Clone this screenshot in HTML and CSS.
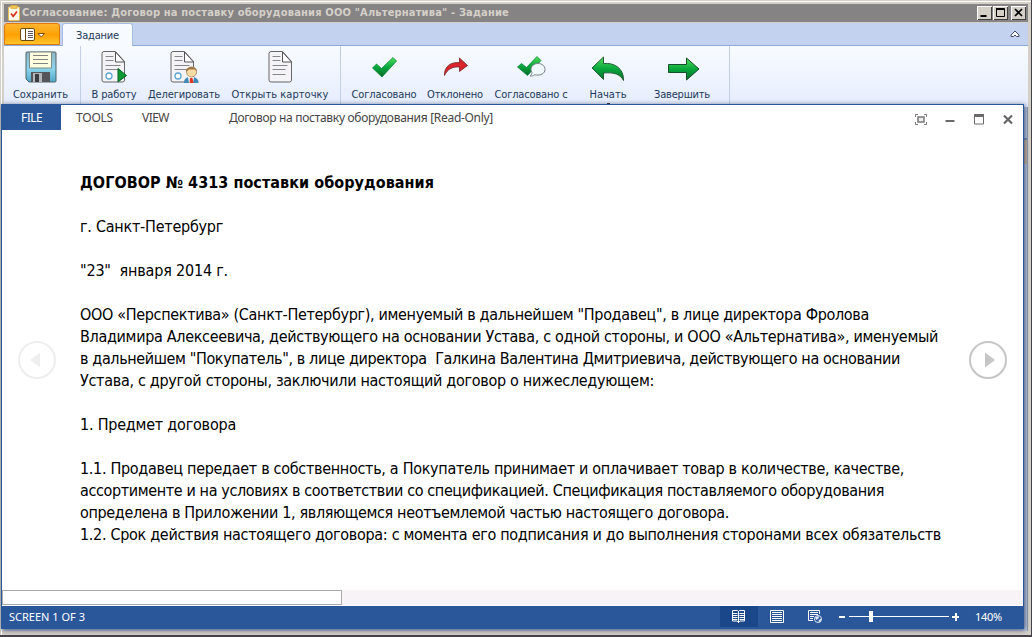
FILE: index.html
```html
<!DOCTYPE html>
<html lang="ru">
<head>
<meta charset="utf-8">
<title>Задание</title>
<link rel="stylesheet" href="styles.css">
</head>
<body>
<div class="window">
  <header class="titlebar">
    <svg class="app-icon" width="12" height="16" viewBox="0 0 12 16"><rect x=".5" y="2" width="11" height="13.500" rx="1" fill="#fffbea" stroke="#e9bf55"/><rect x="3" y=".5" width="6" height="3" fill="#f4c54c" stroke="#e0a630" stroke-width=".6"/><path d="M3 8.500l2.200 2.800L9 6.500" fill="none" stroke="#d8321c" stroke-width="1.700"/></svg>
    <span class="fit" data-w="487">Согласование: Договор на поставку оборудования ООО "Альтернатива" - Задание</span>
    <div class="win-buttons">
      <svg width="15" height="14" viewBox="0 0 15 14"><path d="M3.500 10H9.500" stroke="#000" stroke-width="2"/></svg>
      <svg width="15" height="14" viewBox="0 0 15 14"><path d="M3 2.500H11.500V10.500H3.500V2M3 3.500H12" fill="none" stroke="#000"/></svg>
      <svg class="gap" width="15" height="14" viewBox="0 0 15 14"><path d="M4 3l7 7M11 3l-7 7" stroke="#000" stroke-width="1.7"/></svg>
    </div>
  </header>
  <nav class="tabs">
    <div class="app-menu">
      <svg width="26" height="13" viewBox="0 0 26 13"><rect x=".5" y=".5" width="14" height="12" rx="1.500" fill="#fff" stroke="#6b4a10"/><path d="M5.500 1V12" stroke="#6b4a10"/><path d="M8 3.500h5M8 5.500h5M8 7.500h5M8 9.500h5" stroke="#555"/><path d="M18 5.500h6.500l-3.250 3.500z" fill="#fff" stroke="#7a4a10"/></svg>
    </div>
    <div class="tab"><span class="fit" data-w="43">Задание</span></div>
    <svg class="collapse" width="10" height="8" viewBox="0 0 10 8"><path d="M1 5l4-4 4 4v1.500H6.500L5 5 3.500 6.500H1z" fill="#fff" stroke="#444b66"/></svg>
  </nav>
  <section class="ribbon">
    <div class="group g-save">
      <div class="cmd">
        <svg width="32" height="32" viewBox="0 0 32 32"><defs><linearGradient id="disk" x2="0" y2="1"><stop stop-color="#8fb4c2"/><stop offset=".55" stop-color="#8ed6ef"/><stop offset="1" stop-color="#4fa6c8"/></linearGradient></defs><path d="M1 2q0-1 1-1h28q1 0 1 1v28q0 1-1 1H4l-3-3z" fill="url(#disk)" stroke="#51636c"/><path d="M4.500 1h22v16h-22z" fill="#fffde0" stroke="#7c8c88"/><path d="M8 4.500h15M8 8.500h15M8 12.500h15" stroke="#7f8481"/><path d="M6 21h19v10H6z" fill="#55555a"/><path d="M8 22h9v9H8z" fill="#b4b7ba"/><path d="M10 23h4v8h-4z" fill="#3b3b3f"/></svg>
        <span class="fit" data-w="55">Сохранить</span>
      </div>
    </div>
    <div class="group g-work">
      <div class="cmd w60">
        <svg width="26" height="32" viewBox="0 0 26 32"><use href="#doc"/><circle cx="8" cy="25" r="3" fill="#fff" stroke="#5ba6d2" stroke-width="1.300"/><path d="M17 17.500l8.500 7L17 31z" fill="#0c9a34" stroke="#0a5e20"/></svg>
        <span class="fit" data-w="45">В работу</span>
      </div>
      <div class="cmd w80">
        <svg class="delegate" width="30" height="32" viewBox="0 0 30 32"><use href="#doc"/><circle cx="8" cy="25" r="3" fill="#fff" stroke="#5ba6d2" stroke-width="1.300"/><path d="M14 32c0-5 3-6 7-6s7.500 1 7.500 6z" fill="#3f88b8"/><path d="M18 26h6l-1 6h-4z" fill="#fff"/><path d="M20 27h2.500l1 5h-4z" fill="#e23a20"/><circle cx="21.500" cy="21" r="5" fill="#fbdca4" stroke="#8b6538" stroke-width=".6"/><path d="M16 21c-1-6 11-7 11-.5l-2-2h-6z" fill="#a07844"/></svg>
        <span class="fit" data-w="72">Делегировать</span>
      </div>
      <div class="cmd w110">
        <svg width="24" height="32" viewBox="0 0 24 32"><defs><g id="doc"><path d="M3 .5h11.500l9 10V29a2 2 0 0 1-2 2H3a2 2 0 0 1-2-2V2.500a2 2 0 0 1 2-2z" fill="#f4f4f7" stroke="#66666b"/><path d="M14.500 1v10h9z" fill="#fff" stroke="#55555a"/><path d="M4.500 5.500h8M4.500 9.500h8M4.500 14.500h15M4.500 18.500h13" stroke="#87878c"/></g></defs><use href="#doc"/><path d="M4.500 23.500h13" stroke="#87878c"/></svg>
        <span class="fit" data-w="97">Открыть карточку</span>
      </div>
    </div>
    <div class="group g-result">
      <div class="cmd w72">
        <svg width="32" height="32" viewBox="0 0 32 32"><defs><linearGradient id="gr" x2="0" y2="1"><stop stop-color="#54dc5c"/><stop offset=".5" stop-color="#08a83c"/><stop offset="1" stop-color="#066a2a"/></linearGradient></defs><path d="M4.500 17l4-4 5 4.500L25 6.500l3.500 3.500L14 26z" fill="url(#gr)" stroke="#07883a" stroke-width=".8"/></svg>
        <span class="fit" data-w="65">Согласовано</span>
      </div>
      <div class="cmd w70">
        <svg width="32" height="32" viewBox="0 0 32 32"><path d="M5.500 24.500C5 15 12 11 20.500 11.500V7l8 7.500-8 6v-4.500c-7-.5-12 2-15 8.500z" fill="#d9252b" stroke="#74282a" stroke-width=".8"/></svg>
        <span class="fit" data-w="56">Отклонено</span>
      </div>
      <div class="cmd w82">
        <svg width="32" height="32" viewBox="0 0 32 32"><path d="M2.500 16l4-3.500 5 4L22 5.500l4 4L12.500 24.500z" fill="url(#gr)" stroke="#07883a" stroke-width=".8"/><path d="M17 21.500c-.2 1.800-.8 2.700-1.800 3.500 1.800.2 3.200-.3 4.300-1.200C25.500 25 30 22.500 30 18.500c0-3.500-3-6-7-6s-7 2.500-7 6c0 1.200.4 2.200 1 3z" fill="#f1fbff" stroke="#777f85"/></svg>
        <span class="fit" data-w="73">Согласовано с</span>
      </div>
      <div class="cmd w72">
        <svg width="34" height="32" viewBox="0 0 34 32"><path d="M1 17L12.500 6v6.500C23 11.500 33 17 32.500 29.500c-3-6-9-8.500-20-7.500v6.500z" fill="url(#gr)" stroke="#225e35"/></svg>
        <span class="fit" data-w="37">Начать</span>
        <i class="more"></i>
      </div>
      <div class="cmd w76">
        <svg class="finish" width="34" height="32" viewBox="0 0 34 32"><path d="M1.500 13.500h18v-6.500L32 18 19.500 29v-7.500h-18z" fill="url(#gr)" stroke="#174d2c"/></svg>
        <span class="fit" data-w="56">Завершить</span>
      </div>
    </div>
  </section>
  <div class="backdrop"><i></i></div>
</div>

<main class="word">
  <header class="word-bar">
    <div class="file"><span class="fit" data-w="21">FILE</span></div>
    <div class="tools"><span class="fit" data-w="37">TOOLS</span></div>
    <div class="view"><span class="fit" data-w="27">VIEW</span></div>
    <div class="doc-name"><span class="fit" data-w="264">Договор на поставку оборудования [Read-Only]</span></div>
    <div class="word-buttons">
      <svg width="12" height="11" viewBox="0 0 12 11"><path d="M.5 3V.500H3M9 .500h2.500V3M11.500 8v2.500H9M3 10.500H.500V8" fill="none" stroke="#777"/><rect x="3" y="3" width="6" height="5" fill="#eee" stroke="#777" stroke-width="1.500"/></svg>
      <svg width="10" height="11" viewBox="0 0 10 11"><path d="M.500 7H9.500" stroke="#6b6b6b" stroke-width="2"/></svg>
      <svg width="10" height="11" viewBox="0 0 10 11"><path d="M.500 1v9h9V1" fill="none" stroke="#6b6b6b"/><path d="M0 1.500h10" stroke="#6b6b6b" stroke-width="3"/></svg>
      <svg width="10" height="11" viewBox="0 0 10 11"><path d="M1 1.500l8 8M9 1.500l-8 8" stroke="#666" stroke-width="2.200"/></svg>
    </div>
  </header>
  <section class="reader">
    <svg class="pager prev" width="40" height="40" viewBox="0 0 40 40"><circle cx="20" cy="20" r="18" fill="#fff" stroke="currentColor" stroke-width="2"/><path d="M13 20l10-7.500v15z" fill="currentColor"/></svg>
    <article class="doc">
      <h1><span class="fit" data-w="354">ДОГОВОР № 4313 поставки оборудования</span></h1>
      <p><span class="fit" data-w="143">г. Санкт-Петербург</span></p>
      <p><span class="fit" data-w="148">"23"  января 2014 г.</span></p>
      <p><span class="fit" data-w="789">ООО «Перспектива» (Санкт-Петербург), именуемый в дальнейшем "Продавец", в лице директора Фролова</span>
<span class="fit" data-w="858">Владимира Алексеевича, действующего на основании Устава, с одной стороны, и ООО «Альтернатива», именуемый</span>
<span class="fit" data-w="820">в дальнейшем "Покупатель", в лице директора  Галкина Валентина Дмитриевича, действующего на основании</span>
<span class="fit" data-w="574">Устава, с другой стороны, заключили настоящий договор о нижеследующем:</span></p>
      <p><span class="fit" data-w="156">1. Предмет договора</span></p>
      <p><span class="fit" data-w="824">1.1. Продавец передает в собственность, а Покупатель принимает и оплачивает товар в количестве, качестве,</span>
<span class="fit" data-w="804">ассортименте и на условиях в соответствии со спецификацией. Спецификация поставляемого оборудования</span>
<span class="fit" data-w="649">определена в Приложении 1, являющемся неотъемлемой частью настоящего договора.</span>
<span class="fit" data-w="861">1.2. Срок действия настоящего договора: с момента его подписания и до выполнения сторонами всех обязательств</span></p>
    </article>
    <svg class="pager next" width="40" height="40" viewBox="0 0 40 40"><circle cx="20" cy="20" r="18" fill="#fff" stroke="currentColor" stroke-width="2"/><path d="M17 12.500L27 20l-10 7.500z" fill="currentColor"/></svg>
  </section>
  <div class="scroll"><div class="thumb"></div></div>
  <footer class="status">
    <span class="fit" data-w="76">SCREEN 1 OF 3</span>
    <div class="modes">
      <div class="mode active"><svg width="14" height="14" viewBox="0 0 14 14"><path d="M.500.500h5l1 1 1-1h5v10.500H8l-1.500 1.500L5 11H.500zM6.500 1v12M1 3.500h4.500M1 5.500h4.500M1 7.500h4.500M1 9.500h4.500M7.500 3.500H13M7.500 5.500H13M7.500 7.500H13M7.500 9.500H13" fill="none" stroke="#fff"/></svg></div>
      <div class="mode"><svg width="14" height="13" viewBox="0 0 14 13"><path d="M.500.500h13v12H.500zM2 2.500h10M2 4.500h10M2 6.500h10M2 8.500h10M2 10.500h10" fill="none" stroke="#fff"/></svg></div>
      <div class="mode"><svg width="15" height="13" viewBox="0 0 15 13"><path d="M5 10.500H.500V.500h11V4M2 2.500h8M2 4.500h8M2 6.500h4M2 8.500h3" fill="none" stroke="#fff"/><circle cx="10" cy="9" r="3.500" fill="#2a579a" stroke="#dbe6f4"/><path d="M7 7.500l3.500-1.500.5 2-2.500 2zM10.500 10.500l2.500-2v3l-2 1z" fill="#dbe6f4"/></svg></div>
    </div>
    <svg class="zoom" width="120" height="13" viewBox="0 0 120 13"><path d="M0 7h6M113 7h8M117 3v8" stroke="#fff" stroke-width="2"/><path d="M10 6.500h100" stroke="#fff"/><path d="M30 1h4v11h-4z" fill="#fff"/></svg>
    <span class="fit percent" data-w="27">140%</span>
  </footer>
</main>
<script src="fit.js"></script>
</body>
</html>
```
FILE: styles.css
```css
* { box-sizing: border-box; }
body {
  margin: 0;
  width: 1032px;
  height: 637px;
  overflow: hidden;
  position: relative;
  font: 11px/14px "DejaVu Sans Condensed", "DejaVu Sans", sans-serif;
  font-stretch: condensed;
}
svg { display: block; flex: none; }
.fit { white-space: pre; display: inline-block; flex: none; }

.window {
  width: 1032px;
  height: 637px;
  padding: 4px 4px 4px 4px;
  background: #d4d0c8;
  border-right: 1px solid #45434a;
  border-bottom: 2px solid #45434a;
  box-shadow: inset 1px 1px #d4d0c8, inset 2px 2px #fff;
  display: flex;
  flex-direction: column;
}
.titlebar {
  height: 18px;
  background: #868385;
  display: flex;
  align-items: center;
  color: #d4d0c8;
  font-weight: bold;
  padding: 0 2px 0 4px;
  width: 1024px;
}
.app-icon { margin-right: 2px; }
.win-buttons { display: flex; margin-left: auto; }
.win-buttons svg {
  background: #d4d0c8;
  box-shadow: inset 1px 1px #fff, inset -1px -1px #404040;
}
.win-buttons svg + svg { margin-left: 1px; }
.win-buttons svg.gap { margin-left: 3px; }

.tabs {
  width: 1024px;
  height: 23px;
  margin-top: 1px;
  background: #c3d3ef;
  border-bottom: 1px solid #8cabd9;
  display: flex;
  flex: none;
}
.app-menu {
  width: 56px;
  height: 22px;
  border: 1px solid #e0780c;
  border-radius: 3px 3px 0 0;
  background: linear-gradient(#ffb52e, #fca60c 45%, #ff9d00 50%, #ffc52c);
  display: flex;
  align-items: center;
  padding: 0 0 0 15px;
}
.tab {
  width: 71px;
  height: 23px;
  margin-left: 2px;
  border: 1px solid #a5bde3;
  border-bottom: 0;
  border-radius: 3px 3px 0 0;
  background: #f7faff;
  color: #1e395b;
  text-align: center;
  line-height: 23px;
}
.collapse { margin: 7px 8px 0 auto; }

.ribbon {
  width: 1024px;
  height: 61px;
  flex: none;
  display: flex;
  background: linear-gradient(#f8fbff, #e5ecfd);
  color: #1e395b;
}
.group { display: flex; border-right: 1px solid #c3cfe5; }
.g-save { width: 77px; }
.g-work { width: 260px; padding-left: 3px; }
.g-result { width: 389px; padding-left: 7px; }
.cmd {
  display: flex;
  flex-direction: column;
  align-items: center;
  padding-top: 5px;
  gap: 5px;
  width: 73px;
  position: relative;
}
.w60 { width: 60px; }
.w70 { width: 70px; }
.w72 { width: 72px; }
.w76 { width: 76px; }
.w80 { width: 80px; }
.w82 { width: 82px; }
.w110 { width: 112px; }
.delegate { margin-left: 2px; }
.finish { margin-left: 3px; }
.more {
  position: absolute;
  top: 57px;
  left: 35px;
  width: 3px;
  height: 1px;
  background: #333;
}
.backdrop {
  flex: 1;
  width: 1024px;
  background: #bccbe3;
  display: flex;
  justify-content: flex-end;
  border-right: 1px solid #929eb3;
}
.backdrop i { width: 3px; height: 26px; margin-top: 31px; background: #cfb89e; border-top: 2px solid #7d93b8; }

.word {
  position: absolute;
  left: 1px;
  top: 104px;
  width: 1023px;
  height: 525px;
  background: #fff;
  border: 1px solid #2a579a;
  border-bottom: 0;
  box-shadow: 1px 1px 5px rgba(30, 40, 75, .75);
  display: flex;
  flex-direction: column;
  font-family: "Noto Sans", sans-serif;
}
.word-bar {
  height: 25px;
  display: flex;
  align-items: center;
  font-size: 12px;
  color: #444;
  flex: none;
}
.file {
  width: 59px;
  height: 25px;
  background: #2a579a;
  color: #fff;
  text-align: center;
  line-height: 25px;
}
.tools { width: 66px; padding-left: 15px; }
.view { width: 87px; padding-left: 15px; }
.doc-name { padding-left: 15px; }
.word-buttons {
  display: flex;
  margin: 3px 10px 0 auto;
  gap: 19px;
}
.word-buttons svg:first-child { margin-right: -1px; }
.reader { height: 460px; display: flex; flex: none; }
.doc {
  width: 889px;
  padding: 42px 0 0 23px;
  color: #000;
  font: 16px/22px "DejaVu Sans Condensed", "DejaVu Sans", sans-serif;
  font-stretch: condensed;
}
.doc h1 { margin: 0 0 22px; font-size: 16px; line-height: 22px; height: 22px; }
.doc p { margin: 0 0 22px; white-space: pre; }
.doc .fit { display: inline; }
.pager { margin-top: 210px; }
.prev { margin-left: 15px; color: #eeeeee; }
.next { margin-left: 22px; color: #c6c6c6; }
.scroll { height: 16px; background: #f7f3f7; flex: none; border-bottom: 1px solid #fff; }
.thumb { width: 340px; height: 15px; border: 1px solid #ababab; background: #fff; }
.status {
  height: 24px;
  margin-top: auto;
  background: #2a579a;
  color: #fff;
  display: flex;
  align-items: center;
  padding: 0 0 2px 7px;
}
.modes { display: flex; margin-left: 635px; }
.mode {
  width: 38px;
  height: 21px;
  display: flex;
  align-items: center;
  justify-content: center;
}
.active { background: #19478a; }
.zoom { margin-left: 5px; }
.percent { margin-left: 16px; }
```
FILE: fit.js
```js
// Track each label so that it fills its nominal width.
document.querySelectorAll('.fit').forEach(function (el) {
  var width = el.getBoundingClientRect().width;
  var count = el.textContent.length;
  el.style.letterSpacing = (Number(el.dataset.w) - width) / count + 'px';
});
```
